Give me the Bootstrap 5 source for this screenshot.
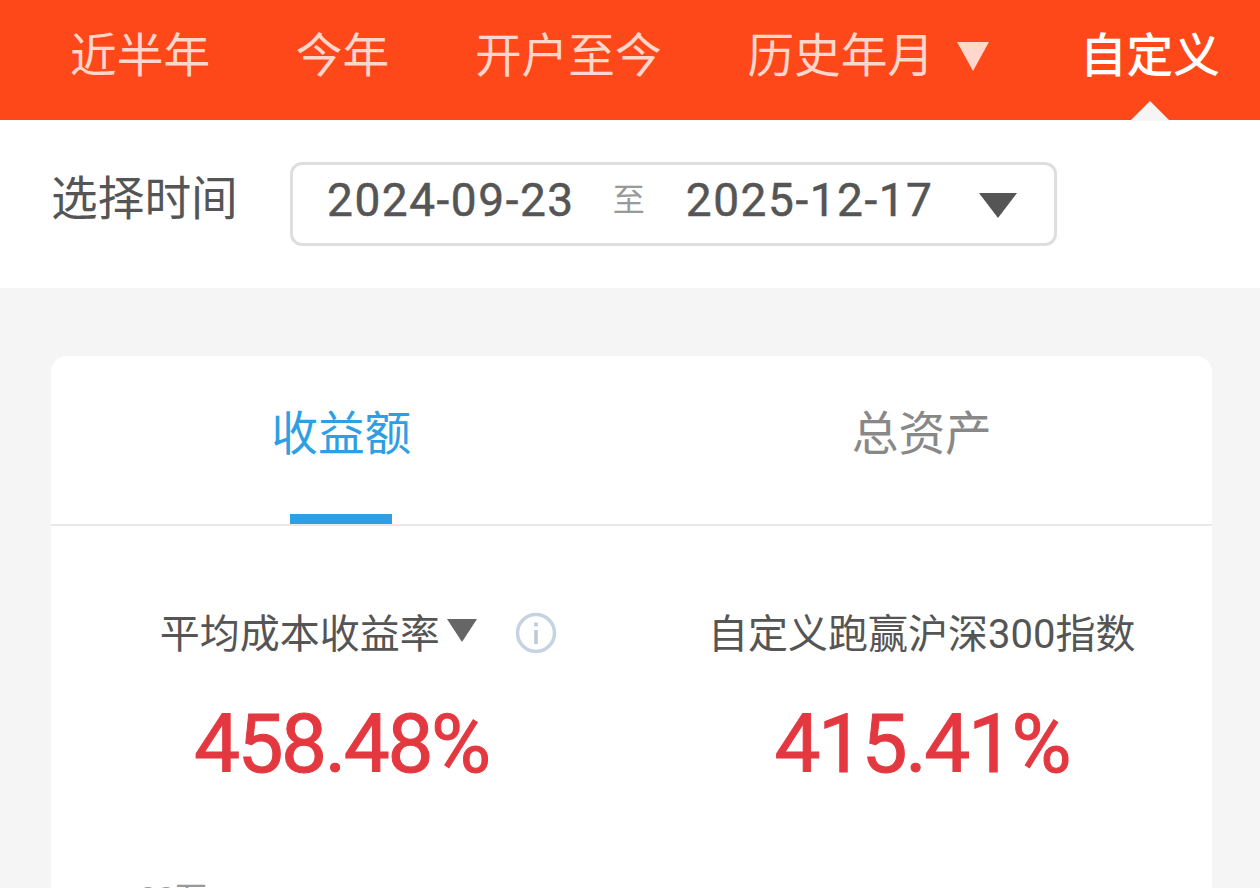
<!DOCTYPE html>
<html lang="zh-CN">
<head>
  <meta charset="UTF-8" />
  <meta name="viewport" content="width=device-width, initial-scale=1.0"/>
  <title>收益额</title>
  <link href="https://cdn.jsdelivr.net/npm/bootstrap@5.3.3/dist/css/bootstrap.min.css" rel="stylesheet">
  <style>
    html, body { height: 888px; overflow: hidden; }
    body { background: #f5f5f5; font-family: "Roboto", "Noto Sans CJK SC", sans-serif; color: #555; }
    .top-bar { height: 120px; background: #ff4819; padding: 0 40px 8px 70px; }
    .top-item { font-size: 46.7px; line-height: 1; color: rgba(255,255,255,.78); white-space: nowrap; }
    .top-item.on { color: #fff; position: relative; font-weight: 500; }
    .top-item.on::after { content: ""; position: absolute; left: 50%; margin-left: -20px; top: 68px; border: 20px solid transparent; border-top: 0; border-bottom-color: #f5f5f5; }
    .tri-top { margin: 0 4px 0 22px; width: 34px; height: 30px; fill: rgba(255,255,255,.78); }
    .time-row { height: 168px; background: #fff; padding-left: 51px; padding-bottom: 8px; }
    .time-label { font-size: 46.7px; line-height: 1; color: #555; width: 239px; margin-top: -2px; }
    .range-box { width: 767px; height: 84px; margin-top: 8px; border: 3px solid #dedede; border-radius: 12px; padding: 0 0 8px 34px; }
    .range-date { font-size: 46px; line-height: 1; color: #555; letter-spacing: 1.55px; -webkit-text-stroke: .5px #555; }
    .range-to { font-size: 32px; color: #999; line-height: 1; margin: 0 41px 0 38px; }
    .tri-box { width: 40px; height: 26px; margin: 10px 0 0 44px; fill: #555; }
    .main-card { margin: 68px 48px 0 51px; background: #fff; border-radius: 16px 16px 0 0; height: 532px; overflow: hidden; }
    .tab-row { height: 170px; border-bottom: 2px solid #e8e8e8; }
    .tab-item { font-size: 46.7px; line-height: 1; color: #888; padding-top: 55px; position: relative; }
    .tab-item.on { color: #2f9fe4; }
    .tab-item.on::after { content: ""; position: absolute; left: 50%; margin-left: -51px; bottom: 0; width: 102px; height: 10px; background: #2f9fe4; }
    .stat-row { padding-top: 85px; }
    .stat-label { font-size: 40px; line-height: 48px; color: #555; height: 48px; white-space: nowrap; }
    .stat-label.has-tip { padding-left: 34px; }
    .tri-stat { width: 32px; height: 24px; fill: #666; margin-left: 6px; margin-top: -10px; }
    .tip-icon { width: 42px; height: 42px; margin-left: 37px; margin-top: -4px; }
    .stat-val { font-size: 82px; line-height: 1; color: #e43840; margin-top: 44px; letter-spacing: -2.5px; -webkit-text-stroke: 1px #e43840; }
    .axis-label { font-size: 32px; line-height: 1; color: #999; padding: 97px 0 0 88px; }
  </style>
</head>
<body>
  <div class="top-bar d-flex justify-content-between align-items-center">
    <div class="top-item">近半年</div>
    <div class="top-item">今年</div>
    <div class="top-item">开户至今</div>
    <div class="top-item d-flex align-items-center">历史年月
      <svg class="tri-top" viewBox="0 0 36 32"><path d="M1 1h34L18 32z"/></svg>
    </div>
    <div class="top-item on">自定义</div>
  </div>

  <div class="time-row d-flex align-items-center">
    <div class="time-label">选择时间</div>
    <div class="range-box d-flex align-items-center">
      <span class="range-date">2024-09-23</span>
      <span class="range-to">至</span>
      <span class="range-date">2025-12-17</span>
      <svg class="tri-box" viewBox="0 0 40 26"><path d="M1 1h38L20 26z"/></svg>
    </div>
  </div>

  <div class="main-card">
    <div class="tab-row row g-0 text-center">
      <div class="col-6 tab-item on">收益额</div>
      <div class="col-6 tab-item">总资产</div>
    </div>
    <div class="stat-row row g-0 text-center">
      <div class="col-6">
        <div class="stat-label has-tip d-flex justify-content-center align-items-center">平均成本收益率
          <svg class="tri-stat" viewBox="0 0 32 24"><path d="M1 1h30L16 24z"/></svg>
          <svg class="tip-icon" viewBox="0 0 42 42"><circle cx="21" cy="21" r="18.5" fill="none" stroke="#c5d3e2" stroke-width="3.5"/><rect x="19.2" y="18" width="3.6" height="14" fill="#bccbdb"/><rect x="19.2" y="10.5" width="3.6" height="4" fill="#bccbdb"/></svg>
        </div>
        <div class="stat-val">458.48%</div>
      </div>
      <div class="col-6">
        <div class="stat-label">自定义跑赢沪深300指数</div>
        <div class="stat-val">415.41%</div>
      </div>
    </div>
    <div class="axis-label">20万</div>
  </div>
  <script src="https://cdn.jsdelivr.net/npm/bootstrap@5.3.3/dist/js/bootstrap.bundle.min.js"></script>
</body>
</html>
